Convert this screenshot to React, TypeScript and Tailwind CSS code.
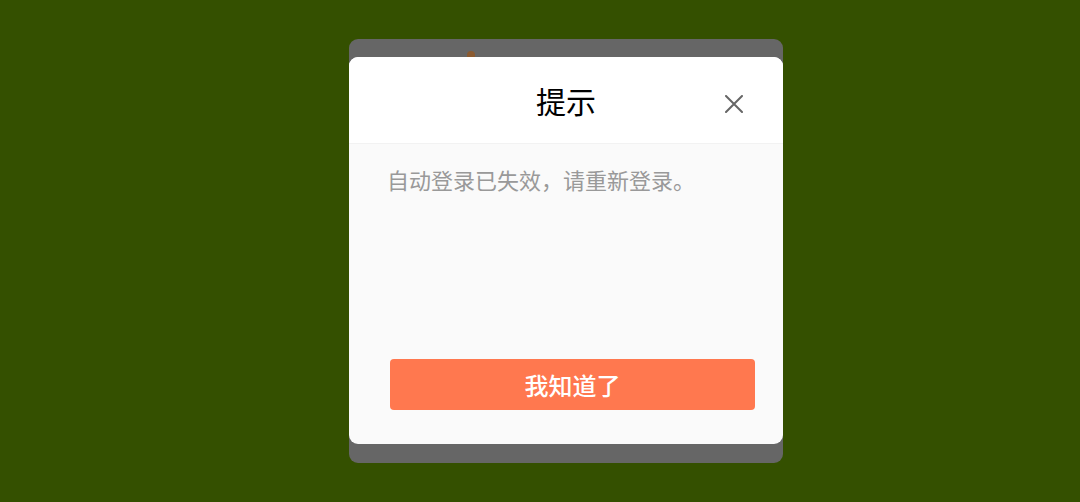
const App = () => {
  return (
    <div
      className="w-[1080px] h-[502px] bg-[#345000] pl-[349px] pt-[39px] overflow-hidden"
      style={{ fontFamily: '"Noto Sans CJK SC", "Noto Sans", sans-serif' }}
    >
      <div className="relative w-[434px] rounded-[9px] bg-[#666666] pt-[18px] pb-[19px]">
        {/* little speck peeking over the dialog */}
        <div className="absolute left-[118px] top-[12px] h-[6px] w-[8px] rounded-t-full bg-[#8a5a30]" />
        <div className="w-[434px] h-[387px] rounded-[9px] overflow-hidden bg-[#fafafa] flex flex-col">
          <div className="relative h-[87px] bg-white border-b border-[#f2f2f2] flex items-center justify-center">
            <span className="text-[30px] leading-none text-black">提示</span>
            <button className="absolute left-[376px] top-[38px] text-[#666666]">
              <svg width="18" height="18" viewBox="0 0 18 18" fill="none">
                <path d="M1 1L17 17M17 1L1 17" stroke="currentColor" strokeWidth="2" strokeLinecap="round" />
              </svg>
            </button>
          </div>
          <div className="flex-1 flex flex-col px-[38px] pt-[20px]">
            <p className="text-[22px] leading-[30px] text-[#999999]">
              自动登录已失效，请重新登录。
            </p>
            <div className="flex-1" />
            <button className="ml-[3px] mb-[34px] h-[51px] w-[365px] rounded-[4px] bg-[#ff784f] text-white text-[24px] font-medium">
              我知道了
            </button>
          </div>
        </div>
      </div>
    </div>
  );
};

export default App;
